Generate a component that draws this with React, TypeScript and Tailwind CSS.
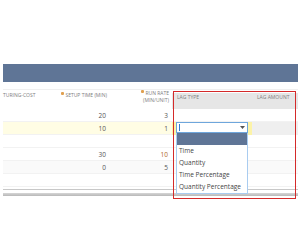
const font = { fontFamily: '"Open Sans", "Liberation Sans", sans-serif' };

type Row = { setup: string; rate: string; tone: 'white' | 'yellow' | 'gray'; edited?: boolean; select?: boolean };

const rows: Row[] = [
  { setup: '20', rate: '3', tone: 'white' },
  { setup: '10', rate: '1', tone: 'yellow', select: true },
  { setup: '', rate: '', tone: 'white' },
  { setup: '30', rate: '10', tone: 'white', edited: true },
  { setup: '0', rate: '5', tone: 'gray' },
  { setup: '', rate: '', tone: 'white' },
];

const options = ['Time', 'Quantity', 'Time Percentage', 'Quantity Percentage'];

const cols = 'grid grid-cols-[57px_50px_62px_80px_46px]';

function Dot() {
  return <span className="mr-px inline-block h-[3px] w-[3px] translate-y-[-2px] rounded-[1px] bg-[#e0a050]" />;
}

export default function App() {
  return (
    <div style={font} className="relative h-[244px] w-[301px] overflow-hidden bg-white">
      <div className="h-[64px]" />
      <div className="mx-[3px] h-[18px] bg-[#5f7596]" />
      <div className="h-[7px]" />

      <div className="ml-[3px] w-[295px] border-t border-[#f0f0f0]">
        <div className={`${cols} h-[19px] text-[5px] uppercase leading-[7px] text-[#808080]`}>
          <div className="pt-[2px]">turing-cost</div>
          <div className="pr-[3px] pt-[2px] text-right">
            <Dot />setup time (min)
          </div>
          <div className="pr-[3px] text-right">
            <Dot />run rate
            <br />
            (min/unit)
          </div>
          <div className="mt-[3px] bg-[#e6e6e6] pl-[5px] pt-[1px]">lag type</div>
          <div className="mt-[3px] bg-[#e6e6e6] pl-[5px] pt-[1px]">lag amount</div>
        </div>

        {rows.map((r, i) => (
          <div
            key={i}
            className={`${cols} h-[13px] border-b border-[#f2f2f2] text-[6.5px] leading-[13px] text-[#555] ${
              r.tone === 'yellow' ? 'bg-[#fffde4]' : r.tone === 'gray' ? 'bg-[#fafafa]' : 'bg-white'
            }`}
          >
            <div />
            <div className="pr-[4px] text-right">{r.setup}</div>
            <div className={`pr-[4px] text-right ${r.edited ? 'text-[#b06a2a]' : ''}`}>{r.rate}</div>
            <div className={r.select ? 'bg-[#fcf3a8]' : ''} />
            <div className={r.select ? 'bg-[#efefef]' : ''} />
          </div>
        ))}

        <div className="mt-[2px] h-px bg-[#c8c8c8]" />
        <div className="mt-[3px] h-[3px] bg-gradient-to-b from-[#d6d6d6] to-[#b8b8b8]" />
      </div>

      {/* highlighted column outline */}
      <div className="pointer-events-none absolute left-[173px] top-[91px] h-[108px] w-[123px] border-[1.5px] border-[#d42a2a]" />

      {/* open select */}
      <div className="absolute left-[176px] top-[122px] w-[72px]">
        <div className="flex h-[11px] items-center justify-between border border-[#6ea6dc] bg-white px-[2px]">
          <span className="h-[7px] w-px bg-[#2f7fd0]" />
          <svg width="5" height="3" viewBox="0 0 5 3">
            <path d="M0 0h5L2.5 3z" fill="#555" />
          </svg>
        </div>
        <ul className="border border-t-0 border-[#a9ccf0] bg-white text-[6.5px] leading-[12px] text-[#444]">
          <li className="h-[12px] bg-[#5f7596]" />
          {options.map((o) => (
            <li key={o} className="h-[12px] pl-[2px]">
              {o}
            </li>
          ))}
        </ul>
      </div>
    </div>
  );
}
